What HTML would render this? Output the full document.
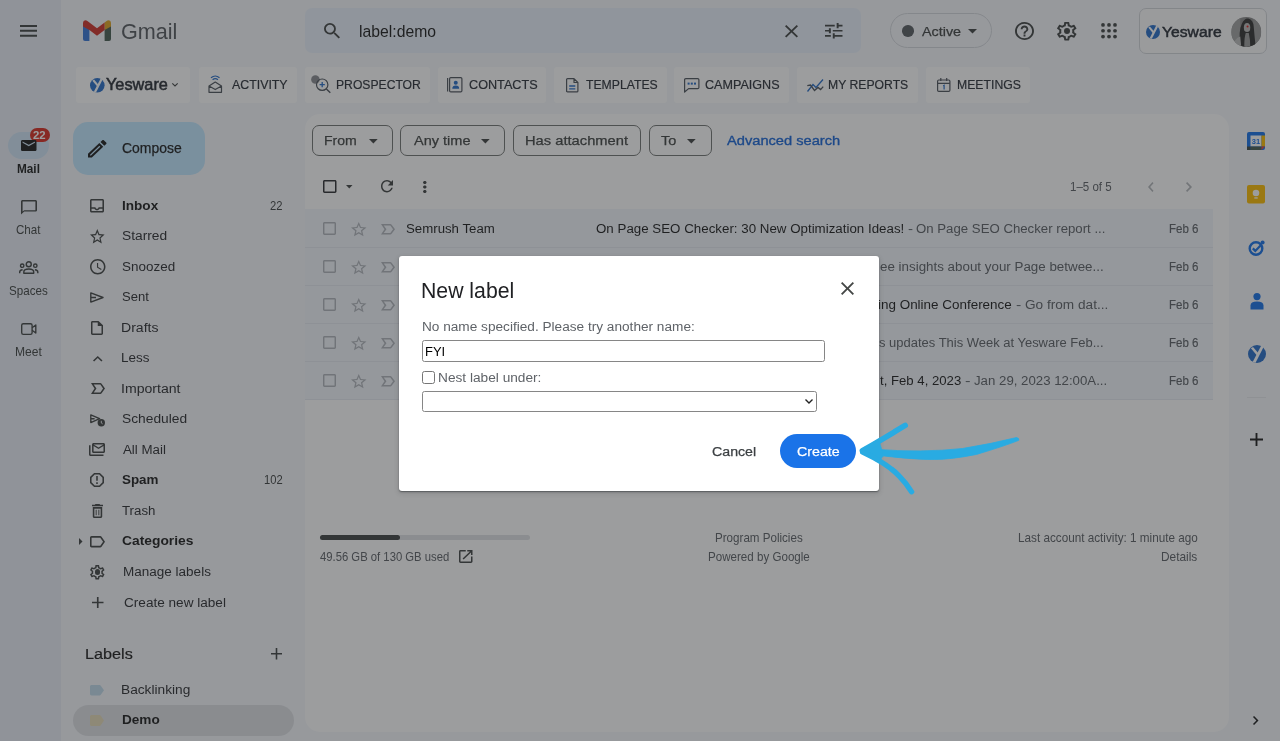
<!DOCTYPE html>
<html lang="en"><head><meta charset="utf-8"><title>Gmail - New label</title>
<style>
html,body{margin:0;padding:0}
body{width:1280px;height:741px;overflow:hidden;position:relative;background:#f6f8fc;font-family:"Liberation Sans",sans-serif;}
.b,.t,.i,.layer,.g{position:absolute}
.g{left:0;top:0;width:0;height:0;margin:0;padding:0}
.layer{left:0;top:0;width:1280px;height:741px;will-change:transform}
.t{white-space:nowrap;line-height:1;transform-origin:0 0;display:block}
.i{display:block;overflow:visible}
</style></head><body>
<div class="layer" id="app">
<div class="g" id="surfaces">
<div class="b" style="left:0px;top:0px;width:61px;height:741px;background:#e9eef6;"></div>
<div class="b" style="left:305px;top:114px;width:924px;height:618px;background:#ffffff;border-radius:15px;"></div>
<div class="b" style="left:305px;top:8px;width:556px;height:45px;background:#eaf1fb;border-radius:7px;"></div>
<div class="b" style="left:76px;top:67px;width:114px;height:35.5px;background:#ffffff;border-radius:3px;"></div>
<div class="b" style="left:199px;top:67px;width:98px;height:35.5px;background:#ffffff;border-radius:3px;"></div>
<div class="b" style="left:305px;top:67px;width:125px;height:35.5px;background:#ffffff;border-radius:3px;"></div>
<div class="b" style="left:438px;top:67px;width:108px;height:35.5px;background:#ffffff;border-radius:3px;"></div>
<div class="b" style="left:554px;top:67px;width:113px;height:35.5px;background:#ffffff;border-radius:3px;"></div>
<div class="b" style="left:674px;top:67px;width:115px;height:35.5px;background:#ffffff;border-radius:3px;"></div>
<div class="b" style="left:797px;top:67px;width:121px;height:35.5px;background:#ffffff;border-radius:3px;"></div>
<div class="b" style="left:926px;top:67px;width:104px;height:35.5px;background:#ffffff;border-radius:3px;"></div>
<div class="b" style="left:890px;top:13px;width:102px;height:35px;border-radius:17.5px;border:1px solid #d5d8dd;box-sizing:border-box;"></div>
<div class="b" style="left:1139px;top:8px;width:128px;height:46px;background:#fbfbfc;border-radius:7px;border:1px solid #d3d6da;box-sizing:border-box;"></div>
<div class="b" style="left:72.5px;top:121.5px;width:132.0px;height:53.5px;background:#c2e7ff;border-radius:15px;"></div>
<div class="b" style="left:8px;top:132px;width:41px;height:27px;background:#d0e4f6;border-radius:14px;"></div>
<div class="b" style="left:72.5px;top:705px;width:221.0px;height:30.5px;background:#dfe1e5;border-radius:16px;"></div>
<div class="b" style="left:312px;top:125px;width:81px;height:31px;border-radius:7px;border:1px solid #747775;box-sizing:border-box;"></div>
<div class="b" style="left:400px;top:125px;width:105px;height:31px;border-radius:7px;border:1px solid #747775;box-sizing:border-box;"></div>
<div class="b" style="left:513px;top:125px;width:128px;height:31px;border-radius:7px;border:1px solid #747775;box-sizing:border-box;"></div>
<div class="b" style="left:649px;top:125px;width:63px;height:31px;border-radius:7px;border:1px solid #747775;box-sizing:border-box;"></div>
<div class="b" style="left:305px;top:209px;width:908px;height:190.5px;background:#f2f6fc;"></div>
<div class="b" style="left:305px;top:247px;width:908px;height:1px;background:#e6eaf0;"></div>
<div class="b" style="left:305px;top:285px;width:908px;height:1px;background:#e6eaf0;"></div>
<div class="b" style="left:305px;top:323px;width:908px;height:1px;background:#e6eaf0;"></div>
<div class="b" style="left:305px;top:361px;width:908px;height:1px;background:#e6eaf0;"></div>
<div class="b" style="left:305px;top:399px;width:908px;height:1px;background:#e6eaf0;"></div>
<div class="b" style="left:320px;top:535px;width:210px;height:5px;background:#e1e3e6;border-radius:3px;"></div>
<div class="b" style="left:320px;top:535px;width:79.5px;height:5px;background:#444746;border-radius:3px;"></div>
<div class="b" style="left:1246.5px;top:396.5px;width:19.0px;height:1.0px;background:#e8eaed;"></div>
<div class="b" style="left:29.5px;top:127.5px;width:20.0px;height:14.5px;background:#d93025;border-radius:7.5px;"></div>
</div>
<header class="g">
<div class="b" style="left:902px;top:25.25px;width:11.5px;height:11.5px;border-radius:50%;background:#5b5f64"></div>
<div class="b" style="left:1063.7px;top:27.7px;width:6.2px;height:6.2px;border-radius:50%;background:#444746"></div>
<svg class="i" style="left:1100.5px;top:23px;width:16px;height:15.5px;fill:#444746" viewBox="0 0 16 16" preserveAspectRatio="none"><circle cx="2" cy="2" r="1.9"/><circle cx="2" cy="8" r="1.9"/><circle cx="2" cy="14" r="1.9"/><circle cx="8" cy="2" r="1.9"/><circle cx="8" cy="8" r="1.9"/><circle cx="8" cy="14" r="1.9"/><circle cx="14" cy="2" r="1.9"/><circle cx="14" cy="8" r="1.9"/><circle cx="14" cy="14" r="1.9"/></svg>
<svg class="i" style="left:83px;top:20px;width:28px;height:21px" viewBox="0 0 28 21">
<path d="M0 5.500 L0 19 Q0 21 2 21 L6.400 21 L6.400 9 Z" fill="#3b78d8"/>
<path d="M28 5.500 L28 19 Q28 21 26 21 L21.600 21 L21.600 9 Z" fill="#4a5f55"/>
<path d="M21.600 2.400 L23.600 .9 Q25.400 -.4 27 .8 Q28 1.600 28 3.200 L28 6.400 L21.600 10 Z" fill="#e0a526"/>
<path d="M0 3.200 Q0 1.600 1 .8 Q2.600 -.4 4.400 .9 L14 8.200 L21.600 2.400 L21.600 10 L14 15.800 L6.400 10 L0 6.400 Z" fill="#d1352b"/>
</svg>
<svg class="i" style="left:1146.3px;top:24.9px;width:14px;height:14px" viewBox="0 0 20 20">
<circle cx="10" cy="10" r="10" fill="#2a6fc9"/>
<path d="M14.600 .8 L17.200 2.400 L8.400 19.600 L5.200 18.800 Z" fill="#fff"/>
<path d="M3.200 3.600 L5.600 2.200 L11.600 9.200 L10.200 12 Z" fill="#fff"/></svg>
<svg class="i" style="left:1230.500px;top:17px;width:30.500px;height:30px" viewBox="0 0 30 30">
<defs><clipPath id="av"><circle cx="15" cy="15" r="15"/></clipPath></defs>
<g clip-path="url(#av)"><rect width="30" height="30" fill="#8c8c8c"/>
<rect x="0" y="0" width="9" height="30" fill="#a2a2a2"/><rect x="22" y="0" width="8" height="30" fill="#9a9a9a"/>
<path d="M9 30 Q7 14 10.500 7 Q13 1 17 1.500 Q22 2.500 22.500 10 Q23.500 22 24.500 30 Z" fill="#343434"/>
<ellipse cx="15.800" cy="10.500" rx="3.200" ry="4.600" fill="#b9b9b9"/>
<path d="M13 30 Q13 20 14.500 16 L17.500 16 Q19 22 19 30 Z" fill="#9c9c9c"/>
<path d="M2 30 Q3 21 9 19.500 L10 30 Z" fill="#bdbdbd"/>
<circle cx="16.300" cy="9.600" r="1" fill="#e02020"/></g></svg>
<span class="t" style="left:120.99px;top:21px;font-size:22.6px;color:#585c61;transform:scaleX(0.9563);">Gmail</span>
<span class="t" style="left:358.51px;top:23px;font-size:16.3px;color:#1f1f1f;transform:scaleX(0.9672);">label:demo</span>
<span class="t" style="left:921.5px;top:25px;font-size:13.7px;color:#444746;transform:scaleX(1.0476);-webkit-text-stroke:0.25px #444746;">Active</span>
<span class="t" style="left:1161.75px;top:24px;font-size:15.2px;color:#2b3038;transform:scaleX(1.0336);-webkit-text-stroke:0.5px #2b3038;">Yesware</span>
<svg class="i" style="left:20px;top:24.8px;width:17px;height:11.7px;fill:#444746;" viewBox="3 6 18 12" preserveAspectRatio="none"><path d="M3 18h18v-2H3v2zm0-5h18v-2H3v2zm0-7v2h18V6H3z"/></svg>
<svg class="i" style="left:324px;top:23px;width:16px;height:15.5px;fill:#444746;" viewBox="3 3 17.49 17.49" preserveAspectRatio="none"><path d="M15.5 14h-.79l-.28-.27A6.471 6.471 0 0 0 16 9.5 6.5 6.5 0 1 0 9.5 16c1.61 0 3.09-.59 4.23-1.57l.27.28v.79l5 4.99L20.49 19l-4.99-5zm-6 0C7.01 14 5 11.99 5 9.5S7.01 5 9.5 5 14 7.01 14 9.5 11.99 14 9.5 14z"/></svg>
<svg class="i" style="left:785px;top:24.5px;width:13px;height:12.5px;fill:#444746;" viewBox="5 5 14 14" preserveAspectRatio="none"><path d="M19 6.41L17.59 5 12 10.59 6.41 5 5 6.41 10.59 12 5 17.59 6.41 19 12 13.41 17.59 19 19 17.59 13.41 12z"/></svg>
<svg class="i" style="left:825px;top:23px;width:17.5px;height:15.5px;fill:#444746;" viewBox="3 3 18 18" preserveAspectRatio="none"><path d="M3 17v2h6v-2H3zM3 5v2h10V5H3zm10 16v-2h8v-2h-8v-2h-2v6h2zM7 9v2H3v2h4v2h2V9H7zm14 4v-2H11v2h10zm-6-4h2V7h4V5h-4V3h-2v6z"/></svg>
<svg class="i" style="left:967.5px;top:29px;width:9px;height:4.5px;fill:#444746;" viewBox="7 10 10 5" preserveAspectRatio="none"><path d="M7 10l5 5 5-5z"/></svg>
<svg class="i" style="left:1015px;top:22px;width:19px;height:18px;fill:#444746;" viewBox="2 2 20 20" preserveAspectRatio="none"><path d="M11 18h2v-2h-2v2zm1-16C6.48 2 2 6.48 2 12s4.48 10 10 10 10-4.48 10-10S17.52 2 12 2zm0 18c-4.41 0-8-3.59-8-8s3.59-8 8-8 8 3.59 8 8-3.59 8-8 8zm0-14c-2.21 0-4 1.79-4 4h2c0-1.1.9-2 2-2s2 .9 2 2c0 2-3 1.75-3 5h2c0-2.25 3-2.5 3-5 0-2.21-1.79-4-4-4z"/></svg>
<svg class="i" style="left:1057px;top:21.5px;width:19.5px;height:18.5px;fill:#444746;" viewBox="2.27 2 19.45 20" preserveAspectRatio="none"><path d="M19.43 12.98c.04-.32.07-.64.07-.98 0-.34-.03-.66-.07-.98l2.11-1.65c.19-.15.24-.42.12-.64l-2-3.46a.5.5 0 0 0-.61-.22l-2.49 1c-.52-.4-1.08-.73-1.69-.98l-.38-2.65A.488.488 0 0 0 14 2h-4c-.25 0-.46.18-.49.42l-.38 2.65c-.61.25-1.17.59-1.69.98l-2.49-1a.566.566 0 0 0-.18-.03c-.17 0-.34.09-.43.25l-2 3.46c-.13.22-.07.49.12.64l2.11 1.65c-.04.32-.07.65-.07.98 0 .33.03.66.07.98l-2.11 1.65c-.19.15-.24.42-.12.64l2 3.46a.5.5 0 0 0 .61.22l2.49-1c.52.4 1.08.73 1.69.98l.38 2.65c.03.24.24.42.49.42h4c.25 0 .46-.18.49-.42l.38-2.65c.61-.25 1.17-.59 1.69-.98l2.49 1c.06.02.12.03.18.03.17 0 .34-.09.43-.25l2-3.46c.12-.22.07-.49-.12-.64l-2.11-1.65zm-1.98-1.71c.04.31.05.52.05.73 0 .21-.02.43-.05.73l-.14 1.13.89.7 1.08.84-.7 1.21-1.27-.51-1.04-.42-.9.68c-.43.32-.84.56-1.25.73l-1.06.43-.16 1.13-.2 1.35h-1.4l-.19-1.35-.16-1.13-1.06-.43c-.43-.18-.83-.41-1.23-.71l-.91-.7-1.06.43-1.27.51-.7-1.21 1.08-.84.89-.7-.14-1.13c-.03-.31-.05-.54-.05-.74s.02-.43.05-.73l.14-1.13-.89-.7-1.08-.84.7-1.21 1.27.51 1.04.42.9-.68c.43-.32.84-.56 1.25-.73l1.06-.43.16-1.13.2-1.35h1.39l.19 1.35.16 1.13 1.06.43c.43.18.83.41 1.23.71l.91.7 1.06-.43 1.27-.51.7 1.21-1.07.85-.89.7.14 1.13z"/></svg>
</header>
<div class="g" role="toolbar" aria-label="Yesware">
<svg class="i" style="left:90.4px;top:77.7px;width:14.6px;height:14.6px" viewBox="0 0 20 20">
<circle cx="10" cy="10" r="10" fill="#2a6fc9"/>
<path d="M14.600 .8 L17.200 2.400 L8.400 19.600 L5.200 18.800 Z" fill="#fff"/>
<path d="M3.200 3.600 L5.600 2.200 L11.600 9.200 L10.200 12 Z" fill="#fff"/></svg>
<svg class="i" style="left:172px;top:83px;width:6px;height:3.5px;fill:none;stroke:#444746;stroke-width:1.1" viewBox="0 0 6 3.5"><path d="M.3 .3 L3 3 L5.700 .3"/></svg>
<svg class="i" style="left:208px;top:75px;width:14.5px;height:18px;fill:none;stroke:#50565e;stroke-width:1.200" viewBox="0 0 14.500 18">
<path d="M1 11 L7.250 7 L13.500 11 L13.500 17.300 L1 17.300 Z M1 11 L7.250 14.600 L13.500 11" stroke-linejoin="round"/>
<path d="M4.600 4.800 Q7.250 2.600 9.900 4.800" stroke="#2a6fc9"/><path d="M3 2.800 Q7.250 -.8 11.500 2.800" stroke="#2a6fc9"/></svg>
<svg class="i" style="left:310.5px;top:74.5px;width:20px;height:18.500px" viewBox="0 0 20 18.500">
<circle cx="4.400" cy="4.400" r="4.250" fill="#8a8d92"/>
<circle cx="11.200" cy="9.700" r="5.700" fill="none" stroke="#50565e" stroke-width="1.200"/>
<path d="M15.400 14 L19.300 17.800" stroke="#50565e" stroke-width="1.400"/>
<path d="M8.600 9.700 H13.800 M11.200 7.100 V12.300" stroke="#2a6fc9" stroke-width="1.300"/></svg>
<svg class="i" style="left:447px;top:77px;width:15.500px;height:15.500px" viewBox="0 0 15.500 15.500">
<rect x="2.600" y=".6" width="12.300" height="14.300" rx="1.200" fill="none" stroke="#50565e" stroke-width="1.200"/>
<path d="M.6 1 V14.500" stroke="#50565e" stroke-width="1.200"/>
<circle cx="8.750" cy="5.800" r="2" fill="#2a6fc9"/><path d="M5.300 11.800 Q5.300 8.600 8.750 8.600 Q12.200 8.600 12.200 11.800 Z" fill="#2a6fc9"/></svg>
<svg class="i" style="left:565.500px;top:77.500px;width:12.500px;height:14.500px" viewBox="0 0 12.500 14.500">
<path d="M.6 1.600 Q.6 .6 1.600 .6 H8 L11.900 4.500 V12.900 Q11.900 13.900 10.900 13.900 H1.600 Q.6 13.900 .6 12.900 Z M8 .6 V4.500 H11.900" fill="none" stroke="#50565e" stroke-width="1.200" stroke-linejoin="round"/>
<path d="M3.200 8 H9.300 M3.200 10.800 H9.300" stroke="#2a6fc9" stroke-width="1.300"/></svg>
<svg class="i" style="left:684px;top:77.500px;width:15.500px;height:15px" viewBox="0 0 15.500 15">
<path d="M.6 1.800 Q.6 .6 1.800 .6 H13.700 Q14.900 .6 14.900 1.800 V9.400 Q14.900 10.600 13.700 10.600 H4.600 L.6 14 Z" fill="none" stroke="#50565e" stroke-width="1.200" stroke-linejoin="round"/>
<rect x="3.600" y="4.600" width="2" height="2" fill="#2a6fc9"/><rect x="6.800" y="4.600" width="2" height="2" fill="#2a6fc9"/><rect x="10" y="4.600" width="2" height="2" fill="#2a6fc9"/></svg>
<svg class="i" style="left:806.500px;top:78.500px;width:16.500px;height:13px;fill:none;stroke-width:1.300" viewBox="0 0 16.500 13">
<path d="M.5 12.500 L6 5.500 L9 8.500 L16 .5" stroke="#2a6fc9"/>
<path d="M.3 6.600 L3.500 6 L7.500 11.500 L11 8.400 L13.600 10.600 L16.200 7.600" stroke="#50565e"/></svg>
<svg class="i" style="left:936.500px;top:78px;width:13.500px;height:14px" viewBox="0 0 13.500 14">
<rect x=".6" y="2" width="12.300" height="11.400" rx="1.200" fill="none" stroke="#50565e" stroke-width="1.200"/>
<path d="M.6 5.400 H12.900 M3.800 0 V3 M9.700 0 V3" stroke="#50565e" stroke-width="1.200"/>
<path d="M6.200 8 L7.100 7.400 V11.400" stroke="#2a6fc9" stroke-width="1.200" fill="none"/></svg>
<span class="t" style="left:105.75px;top:76px;font-size:17px;color:#2b3038;transform:scaleX(0.9587);-webkit-text-stroke:0.55px #2b3038;">Yesware</span>
<span class="t" style="left:232px;top:78px;font-size:13.3px;color:#2e333b;transform:scaleX(0.9294);-webkit-text-stroke:0.2px #2e333b;">ACTIVITY</span>
<span class="t" style="left:335.55px;top:78px;font-size:13.3px;color:#2e333b;transform:scaleX(0.9138);-webkit-text-stroke:0.2px #2e333b;">PROSPECTOR</span>
<span class="t" style="left:468.91px;top:78px;font-size:13.3px;color:#2e333b;transform:scaleX(0.9510);-webkit-text-stroke:0.2px #2e333b;">CONTACTS</span>
<span class="t" style="left:585.81px;top:78px;font-size:13.3px;color:#2e333b;transform:scaleX(0.9182);-webkit-text-stroke:0.2px #2e333b;">TEMPLATES</span>
<span class="t" style="left:705.41px;top:78px;font-size:13.3px;color:#2e333b;transform:scaleX(0.9466);-webkit-text-stroke:0.2px #2e333b;">CAMPAIGNS</span>
<span class="t" style="left:828.05px;top:78px;font-size:13.3px;color:#2e333b;transform:scaleX(0.9175);-webkit-text-stroke:0.2px #2e333b;">MY REPORTS</span>
<span class="t" style="left:956.54px;top:78px;font-size:13.3px;color:#2e333b;transform:scaleX(0.9210);-webkit-text-stroke:0.2px #2e333b;">MEETINGS</span>
</div>
<nav class="g" aria-label="Apps">
<svg class="i" style="left:19px;top:261px;width:19.500px;height:13px;fill:none;stroke:#444746;stroke-width:1.400" viewBox="0 0 19.500 13">
<circle cx="9.750" cy="3.300" r="2.500"/><circle cx="3.200" cy="4.700" r="1.700"/><circle cx="16.300" cy="4.700" r="1.700"/>
<path d="M4.800 12.300 V10.900 Q4.800 8 9.750 8 Q14.700 8 14.700 10.900 V12.300 Z" stroke-linejoin="round"/>
<path d="M.7 12.300 V11 Q.7 9 3.600 8.700 M18.800 12.300 V11 Q18.800 9 15.900 8.700"/></svg>
<svg class="i" style="left:21px;top:322.500px;width:15.500px;height:12px;fill:none;stroke:#444746;stroke-width:1.350;stroke-linejoin:round" viewBox="0 0 15.500 12"><rect x=".7" y=".7" width="10.400" height="10.600" rx="1.600"/><path d="M11.100 4.700 L14.800 2 V10 L11.100 7.300"/></svg>
<span class="t" style="left:33.14px;top:130px;font-size:10.8px;color:#ffffff;transform:scaleX(1.0520);font-weight:700;">22</span>
<span class="t" style="left:17.26px;top:164px;font-size:11.9px;color:#1f1f1f;transform:scaleX(0.9909);font-weight:700;">Mail</span>
<span class="t" style="left:15.96px;top:225px;font-size:11.9px;color:#444746;transform:scaleX(0.9748);">Chat</span>
<span class="t" style="left:9.14px;top:286px;font-size:11.9px;color:#444746;transform:scaleX(0.9757);">Spaces</span>
<span class="t" style="left:14.55px;top:347px;font-size:11.9px;color:#444746;transform:scaleX(1.0170);">Meet</span>
<svg class="i" style="left:21px;top:140px;width:15.5px;height:11px;fill:#1f1f1f;" viewBox="2 4 20 16" preserveAspectRatio="none"><path d="M20 4H4c-1.1 0-1.99.9-1.99 2L2 18c0 1.1.9 2 2 2h16c1.1 0 2-.9 2-2V6c0-1.1-.9-2-2-2zm0 4l-8 5-8-5V6l8 5 8-5v2z"/></svg>
<svg class="i" style="left:20.5px;top:199.5px;width:16px;height:14.5px;fill:#444746;" viewBox="2 2 20 20" preserveAspectRatio="none"><path d="M20 2H4c-1.1 0-2 .9-2 2v18l4-4h14c1.1 0 2-.9 2-2V4c0-1.1-.9-2-2-2zm0 14H6l-2 2V4h16v12z"/></svg>
</nav>
<nav class="g" aria-label="Mail folders">
<svg class="i" style="left:90px;top:291.500px;width:14px;height:11px;fill:none;stroke:#444746;stroke-width:1.400;stroke-linejoin:round" viewBox="0 0 14 11"><path d="M.8 .9 L13 5.500 L.8 10.100 Z M.8 5.500 H6"/></svg>
<svg class="i" style="left:90px;top:414px;width:15px;height:12.500px" viewBox="0 0 15 12.500">
<path d="M.8 .8 L9.600 4.700 L.8 8.600 Z M.8 4.700 H4.600" fill="none" stroke="#444746" stroke-width="1.350" stroke-linejoin="round"/>
<circle cx="11.300" cy="8.800" r="3.700" fill="#444746"/><path d="M11.300 6.800 V9 L12.700 9.900" stroke="#f6f8fc" stroke-width=".9" fill="none"/></svg>
<div class="b" style="left:94.500px;top:569px;width:5.500px;height:5.500px;border-radius:50%;background:#444746"></div>
<span class="t" style="left:121.95px;top:141px;font-size:14.6px;color:#1f1f1f;transform:scaleX(0.9557);-webkit-text-stroke:0.25px #1f1f1f;">Compose</span>
<span class="t" style="left:121.65px;top:199px;font-size:13.7px;color:#1f1f1f;transform:scaleX(0.9927);font-weight:700;">Inbox</span>
<span class="t" style="left:122.07px;top:229px;font-size:13.7px;color:#303134;transform:scaleX(1.0062);">Starred</span>
<span class="t" style="left:122.08px;top:260px;font-size:13.7px;color:#303134;transform:scaleX(0.9832);">Snoozed</span>
<span class="t" style="left:122.09px;top:290px;font-size:13.7px;color:#303134;transform:scaleX(0.9532);">Sent</span>
<span class="t" style="left:121.4px;top:321px;font-size:13.7px;color:#303134;transform:scaleX(1.0274);">Drafts</span>
<span class="t" style="left:121.45px;top:351px;font-size:13.7px;color:#303134;transform:scaleX(0.9840);">Less</span>
<span class="t" style="left:121.4px;top:382px;font-size:13.7px;color:#303134;transform:scaleX(1.0291);">Important</span>
<span class="t" style="left:122.07px;top:412px;font-size:13.7px;color:#303134;transform:scaleX(1.0071);">Scheduled</span>
<span class="t" style="left:122.5px;top:443px;font-size:13.7px;color:#303134;transform:scaleX(0.9712);">All Mail</span>
<span class="t" style="left:122.29px;top:473px;font-size:13.7px;color:#1f1f1f;transform:scaleX(0.9791);font-weight:700;">Spam</span>
<span class="t" style="left:122.29px;top:504px;font-size:13.7px;color:#303134;transform:scaleX(0.9694);">Trash</span>
<span class="t" style="left:122.07px;top:534px;font-size:13.7px;color:#1f1f1f;transform:scaleX(1.0097);font-weight:700;">Categories</span>
<span class="t" style="left:269.97px;top:201px;font-size:11.9px;color:#444746;transform:scaleX(0.9429);">22</span>
<span class="t" style="left:263.8px;top:475px;font-size:11.9px;color:#444746;transform:scaleX(0.9394);">102</span>
<span class="t" style="left:123.44px;top:565px;font-size:13.7px;color:#303134;transform:scaleX(0.9873);">Manage labels</span>
<span class="t" style="left:123.86px;top:596px;font-size:13.7px;color:#303134;transform:scaleX(0.9924);">Create new label</span>
<span class="t" style="left:85.23px;top:646px;font-size:15.3px;color:#1f1f1f;transform:scaleX(1.0596);-webkit-text-stroke:0.2px #1f1f1f;">Labels</span>
<span class="t" style="left:121.43px;top:683px;font-size:13.7px;color:#303134;transform:scaleX(1.0006);">Backlinking</span>
<span class="t" style="left:121.65px;top:713px;font-size:13.7px;color:#1f1f1f;transform:scaleX(0.9930);font-weight:700;">Demo</span>
<svg class="i" style="left:88px;top:139.5px;width:18.5px;height:17.5px;fill:#1f1f1f;" viewBox="3 3 18 18" preserveAspectRatio="none"><path d="M14.06 9.02l.92.92L5.92 19H5v-.92l9.06-9.06M17.66 3c-.25 0-.51.1-.7.29l-1.83 1.83 3.75 3.75 1.83-1.83a.996.996 0 0 0 0-1.41l-2.34-2.34c-.2-.2-.45-.29-.71-.29zm-3.6 3.19L3 17.25V21h3.75L17.81 9.94l-3.75-3.75z"/></svg>
<svg class="i" style="left:90px;top:199px;width:14px;height:13.5px;fill:#444746;" viewBox="3 3 18 18" preserveAspectRatio="none"><path d="M19 3H5c-1.1 0-2 .9-2 2v14c0 1.1.89 2 2 2h14c1.1 0 2-.9 2-2V5c0-1.1-.9-2-2-2zm0 16H5v-3h3.56c.69 1.19 1.97 2 3.45 2s2.75-.81 3.45-2H19v3zm0-5h-4.99c0 1.1-.9 2-2 2s-2-.9-2-2H5V5h14v9z"/></svg>
<svg class="i" style="left:89.7px;top:229.3px;width:14.6px;height:14.5px;fill:#444746;" viewBox="2 2 20 19" preserveAspectRatio="none"><path d="M22 9.24l-7.19-.62L12 2 9.19 8.63 2 9.24l5.46 4.73L5.82 21 12 17.27 18.18 21l-1.63-7.03L22 9.24zM12 15.4l-3.76 2.27 1-4.28-3.32-2.88 4.38-.38L12 6.1l1.71 4.04 4.38.38-3.32 2.88 1 4.28L12 15.4z"/></svg>
<svg class="i" style="left:89.5px;top:259px;width:15.5px;height:15.5px;fill:#444746;" viewBox="2 2 20 20" preserveAspectRatio="none"><path d="M11.99 2C6.47 2 2 6.48 2 12s4.47 10 9.99 10C17.52 22 22 17.52 22 12S17.52 2 11.99 2zM12 20c-4.42 0-8-3.58-8-8s3.58-8 8-8 8 3.58 8 8-3.58 8-8 8zm.5-13H11v6l5.25 3.15.75-1.23-4.5-2.67z"/></svg>
<svg class="i" style="left:91px;top:320.5px;width:12px;height:14px;fill:#444746;" viewBox="4 2 16 20" preserveAspectRatio="none"><path d="M14 2H6c-1.1 0-1.99.9-1.99 2L4 20c0 1.1.89 2 1.99 2H18c1.1 0 2-.9 2-2V8l-6-6zM6 20V4h7v5h5v11H6z"/></svg>
<svg class="i" style="left:92.5px;top:356px;width:9.5px;height:5.5px;fill:#444746;" viewBox="6 8 12 7.41" preserveAspectRatio="none"><path d="M12 8l-6 6 1.41 1.41L12 10.83l4.59 4.58L18 14z"/></svg>
<svg class="i" style="left:90.5px;top:383px;width:14px;height:11px;fill:#444746;" viewBox="3 5 18 14" preserveAspectRatio="none"><path d="M15 19H3l4.5-7L3 5h12c.65 0 1.26.31 1.63.84L21 12l-4.37 6.16c-.37.52-.98.84-1.63.84zm-8.5-2H15l3.5-5L15 7H6.5l3.5 5-3.500 5z"/></svg>
<svg class="i" style="left:89px;top:443px;width:16px;height:13px;fill:#444746;" viewBox="1 4 21 17" preserveAspectRatio="none"><path d="M22 6c0-1.1-.9-2-2-2H7c-1.1 0-2 .9-2 2v9c0 1.1.9 2 2 2h13c1.1 0 2-.9 2-2V6zm-2 0l-6.5 4L7 6h13zm0 9H7V8l6.5 4L20 8v7zM3 19V7H1v12c0 1.1.9 2 2 2h17v-2H3z"/></svg>
<svg class="i" style="left:90px;top:473px;width:14px;height:14px;fill:#444746;" viewBox="3 3 18 18" preserveAspectRatio="none"><path d="M15.73 3H8.27L3 8.27v7.46L8.27 21h7.46L21 15.73V8.27L15.73 3zM19 14.9L14.9 19H9.1L5 14.9V9.1L9.1 5h5.8L19 9.1v5.8zM11 7h2v6h-2zm0 8h2v2h-2z"/></svg>
<svg class="i" style="left:91.5px;top:503.5px;width:11px;height:14px;fill:#444746;" viewBox="5 3 14 18" preserveAspectRatio="none"><path d="M16 9v10H8V9h8m-1.5-6h-5l-1 1H5v2h14V4h-3.500l-1-1zM18 7H6v12c0 1.1.9 2 2 2h8c1.1 0 2-.9 2-2V7zM9.7 10.5h1.200v7H9.7zm3.400 0h1.200v7h-1.200z"/></svg>
<svg class="i" style="left:79px;top:537.5px;width:3.5px;height:7px;fill:#444746;" viewBox="10 7 5 10" preserveAspectRatio="none"><path d="M10 17l5-5-5-5v10z"/></svg>
<svg class="i" style="left:89.5px;top:535.5px;width:15px;height:11.5px;fill:#444746;" viewBox="3 5 19 14" preserveAspectRatio="none"><path d="M17.63 5.84C17.27 5.33 16.67 5 16 5L5 5.01C3.9 5.01 3 5.9 3 7v10c0 1.1.9 1.99 2 1.99L16 19c.67 0 1.27-.33 1.63-.84L22 12l-4.37-6.16zM16 17H5V7h11l3.55 5L16 17z"/></svg>
<svg class="i" style="left:90px;top:564.5px;width:14.5px;height:14.5px;fill:#444746;" viewBox="2.27 2 19.45 20" preserveAspectRatio="none"><path d="M19.43 12.98c.04-.32.07-.64.07-.98 0-.34-.03-.66-.07-.98l2.11-1.65c.19-.15.24-.42.12-.64l-2-3.46a.5.5 0 0 0-.61-.22l-2.49 1c-.52-.4-1.08-.73-1.69-.98l-.38-2.65A.488.488 0 0 0 14 2h-4c-.25 0-.46.18-.49.42l-.38 2.65c-.61.25-1.17.59-1.69.98l-2.49-1a.566.566 0 0 0-.18-.03c-.17 0-.34.09-.43.25l-2 3.46c-.13.22-.07.49.12.64l2.11 1.65c-.04.32-.07.65-.07.98 0 .33.03.66.07.98l-2.11 1.65c-.19.15-.24.42-.12.64l2 3.46a.5.5 0 0 0 .61.22l2.49-1c.52.4 1.08.73 1.69.98l.38 2.65c.03.24.24.42.49.42h4c.25 0 .46-.18.49-.42l.38-2.65c.61-.25 1.17-.59 1.69-.98l2.49 1c.06.02.12.03.18.03.17 0 .34-.09.43-.25l2-3.46c.12-.22.07-.49-.12-.64l-2.11-1.65zm-1.98-1.71c.04.31.05.52.05.73 0 .21-.02.43-.05.73l-.14 1.13.89.7 1.08.84-.7 1.21-1.27-.51-1.04-.42-.9.68c-.43.32-.84.56-1.25.73l-1.06.43-.16 1.13-.2 1.35h-1.4l-.19-1.35-.16-1.13-1.06-.43c-.43-.18-.83-.41-1.23-.71l-.91-.7-1.06.43-1.27.51-.7-1.21 1.08-.84.89-.7-.14-1.13c-.03-.31-.05-.54-.05-.74s.02-.43.05-.73l.14-1.13-.89-.7-1.08-.84.7-1.21 1.27.51 1.04.42.9-.68c.43-.32.84-.56 1.25-.73l1.06-.43.16-1.13.2-1.35h1.39l.19 1.35.16 1.13 1.06.43c.43.18.83.41 1.23.71l.91.7 1.06-.43 1.27-.51.7 1.21-1.07.85-.89.7.14 1.13z"/></svg>
<svg class="i" style="left:91.5px;top:597px;width:11.5px;height:11px;fill:#444746;" viewBox="5 5 14 14" preserveAspectRatio="none"><path d="M19 13h-6v6h-2v-6H5v-2h6V5h2v6h6v2z"/></svg>
<svg class="i" style="left:271px;top:648px;width:11px;height:11.5px;fill:#444746;" viewBox="5 5 14 14" preserveAspectRatio="none"><path d="M19 13h-6v6h-2v-6H5v-2h6V5h2v6h6v2z"/></svg>
<svg class="i" style="left:90px;top:684.5px;width:14px;height:10.5px;fill:#c2dceb;" viewBox="3 5 19 14" preserveAspectRatio="none"><path d="M17.63 5.84C17.27 5.33 16.67 5 16 5L5 5.01C3.9 5.01 3 5.9 3 7v10c0 1.1.9 1.990 2 1.990L16 19c.67 0 1.27-.33 1.63-.84L22 12l-4.37-6.16z"/></svg>
<svg class="i" style="left:90px;top:714.5px;width:14px;height:11px;fill:#e6dcb9;" viewBox="3 5 19 14" preserveAspectRatio="none"><path d="M17.63 5.84C17.27 5.33 16.67 5 16 5L5 5.01C3.9 5.01 3 5.9 3 7v10c0 1.1.9 1.990 2 1.990L16 19c.67 0 1.27-.33 1.63-.84L22 12l-4.37-6.16z"/></svg>
</nav>
<aside class="g" aria-label="Side panel">
<svg class="i" style="left:1247px;top:132px;width:18px;height:18px" viewBox="0 0 18 18">
<rect x="0" y="0" width="18" height="18" rx="2" fill="#1a73e8"/><rect x="3.500" y="3.500" width="11" height="11" fill="#ffffff"/>
<rect x="14.500" y="3.500" width="3.500" height="11" fill="#fbbc04"/><rect x="3.500" y="14.500" width="11" height="3.500" fill="#4a5f55"/>
<path d="M14.500 14.500 H18 L14.500 18 Z" fill="#ea4335"/><rect x="0" y="14.500" width="3.500" height="3.500" fill="#3f4a46"/>
<text x="9" y="12.200" font-family="Liberation Sans, sans-serif" font-size="7.500" font-weight="700" text-anchor="middle" fill="#1a73e8">31</text></svg>
<svg class="i" style="left:1247px;top:185px;width:18px;height:18.500px" viewBox="0 0 18 18.500">
<rect width="18" height="18.500" rx="2" fill="#fbbc04"/><circle cx="9" cy="8" r="3.300" fill="#fff"/><rect x="7.300" y="12.300" width="3.400" height="1.300" fill="#fff"/></svg>
<svg class="i" style="left:1248px;top:239.500px;width:17px;height:16px" viewBox="0 0 17 16">
<circle cx="8" cy="8.500" r="6.300" fill="none" stroke="#1a73e8" stroke-width="2.400"/>
<path d="M4.800 8.400 L7.300 10.900 L13.500 4.500" fill="none" stroke="#1a73e8" stroke-width="2.200"/><circle cx="14.600" cy="2.400" r="2" fill="#1a73e8"/></svg>
<svg class="i" style="left:1249.500px;top:292.500px;width:13.500px;height:16.500px" viewBox="0 0 13.500 16.500">
<circle cx="7" cy="3.600" r="3.600" fill="#1a73e8"/><path d="M.5 16.500 V12.500 Q.5 8.500 7 8.500 Q13.500 8.500 13.500 12.500 V16.500 Z" fill="#1a73e8"/></svg>
<svg class="i" style="left:1247.5px;top:345px;width:18px;height:18px" viewBox="0 0 20 20">
<circle cx="10" cy="10" r="10" fill="#2a6fc9"/>
<path d="M14.600 .8 L17.200 2.400 L8.400 19.600 L5.200 18.800 Z" fill="#fff"/>
<path d="M3.200 3.600 L5.600 2.200 L11.600 9.200 L10.200 12 Z" fill="#fff"/></svg>
<svg class="i" style="left:1250px;top:433px;width:13px;height:13px;fill:#1f1f1f;" viewBox="5 5 14 14" preserveAspectRatio="none"><path d="M19 13h-6v6h-2v-6H5v-2h6V5h2v6h6v2z"/></svg>
<svg class="i" style="left:1252.5px;top:716px;width:5.5px;height:9px;fill:#1f1f1f;" viewBox="8.59 6 7.41 12" preserveAspectRatio="none"><path d="M10 6L8.59 7.41 13.17 12l-4.58 4.59L10 18l6-6z"/></svg>
</aside>
<main class="g">
<span class="t" style="left:324.4px;top:134px;font-size:13.7px;color:#444746;transform:scaleX(1.0271);-webkit-text-stroke:0.25px #444746;">From</span>
<span class="t" style="left:413.5px;top:134px;font-size:13.7px;color:#444746;transform:scaleX(1.0618);-webkit-text-stroke:0.25px #444746;">Any time</span>
<span class="t" style="left:524.85px;top:134px;font-size:13.7px;color:#444746;transform:scaleX(1.0746);-webkit-text-stroke:0.25px #444746;">Has attachment</span>
<span class="t" style="left:661.27px;top:134px;font-size:13.7px;color:#444746;transform:scaleX(1.0584);-webkit-text-stroke:0.25px #444746;">To</span>
<span class="t" style="left:727px;top:134px;font-size:13.7px;color:#1c68d8;transform:scaleX(1.0705);-webkit-text-stroke:0.35px #1c68d8;">Advanced search</span>
<span class="t" style="left:1070.28px;top:182px;font-size:11.9px;color:#5f6368;transform:scaleX(0.9693);">1–5 of 5</span>
<span class="t" style="left:1168.6px;top:224px;font-size:11.9px;color:#5f6368;transform:scaleX(0.9684);-webkit-text-stroke:0.15px #5f6368;">Feb 6</span>
<span class="t" style="left:1168.6px;top:262px;font-size:11.9px;color:#5f6368;transform:scaleX(0.9684);-webkit-text-stroke:0.15px #5f6368;">Feb 6</span>
<span class="t" style="left:1168.6px;top:300px;font-size:11.9px;color:#5f6368;transform:scaleX(0.9684);-webkit-text-stroke:0.15px #5f6368;">Feb 6</span>
<span class="t" style="left:1168.6px;top:338px;font-size:11.9px;color:#5f6368;transform:scaleX(0.9684);-webkit-text-stroke:0.15px #5f6368;">Feb 6</span>
<span class="t" style="left:1168.6px;top:376px;font-size:11.9px;color:#5f6368;transform:scaleX(0.9684);-webkit-text-stroke:0.15px #5f6368;">Feb 6</span>
<span class="t" style="left:406.09px;top:222px;font-size:13.7px;color:#1f1f1f;transform:scaleX(0.9671);">Semrush Team</span>
<span class="t" style="left:595.87px;top:222px;font-size:13.7px;color:#1f1f1f;transform:scaleX(0.9740);">On Page SEO Checker: 30 New Optimization Ideas!</span>
<span class="t" style="left:907.53px;top:222px;font-size:13.7px;color:#5f6368;transform:scaleX(1.0992);">-</span>
<span class="t" style="left:916.08px;top:222px;font-size:13.7px;color:#5f6368;transform:scaleX(0.9652);">On Page SEO Checker report ...</span>
<span class="t" style="left:880.28px;top:260px;font-size:13.7px;color:#5f6368;transform:scaleX(0.9764);">ee insights about your Page betwee...</span>
<span class="t" style="left:878.16px;top:298px;font-size:13.7px;color:#1f1f1f;transform:scaleX(0.9821);">ing Online Conference</span>
<span class="t" style="left:1016.31px;top:298px;font-size:13.7px;color:#5f6368;transform:scaleX(1.1541);">-</span>
<span class="t" style="left:1024.86px;top:298px;font-size:13.7px;color:#5f6368;transform:scaleX(0.9955);">Go from dat...</span>
<span class="t" style="left:879.4px;top:336px;font-size:13.7px;color:#5f6368;transform:scaleX(0.9478);">s updates This Week at Yesware Feb...</span>
<span class="t" style="left:879.8px;top:374px;font-size:13.7px;color:#1f1f1f;transform:scaleX(0.9621);">t, Feb 4, 2023</span>
<span class="t" style="left:965.08px;top:374px;font-size:13.7px;color:#5f6368;transform:scaleX(1.2091);">-</span>
<span class="t" style="left:974.09px;top:374px;font-size:13.7px;color:#5f6368;transform:scaleX(0.9669);">Jan 29, 2023 12:00A...</span>
<svg class="i" style="left:368.5px;top:139px;width:8.7px;height:4.5px;fill:#444746;" viewBox="7 10 10 5" preserveAspectRatio="none"><path d="M7 10l5 5 5-5z"/></svg>
<svg class="i" style="left:480.5px;top:139px;width:8.7px;height:4.5px;fill:#444746;" viewBox="7 10 10 5" preserveAspectRatio="none"><path d="M7 10l5 5 5-5z"/></svg>
<svg class="i" style="left:687px;top:139px;width:8.7px;height:4.5px;fill:#444746;" viewBox="7 10 10 5" preserveAspectRatio="none"><path d="M7 10l5 5 5-5z"/></svg>
<svg class="i" style="left:323px;top:180px;width:13.5px;height:13px;fill:#303134;" viewBox="3 3 18 18" preserveAspectRatio="none"><path d="M19 5v14H5V5h14m0-2H5c-1.1 0-2 .9-2 2v14c0 1.1.9 2 2 2h14c1.1 0 2-.9 2-2V5c0-1.1-.9-2-2-2z"/></svg>
<svg class="i" style="left:345.5px;top:184.5px;width:6.5px;height:3.5px;fill:#444746;" viewBox="7 10 10 5" preserveAspectRatio="none"><path d="M7 10l5 5 5-5z"/></svg>
<svg class="i" style="left:381px;top:180px;width:12px;height:12.5px;fill:#444746;" viewBox="4.01 4 15.99 16" preserveAspectRatio="none"><path d="M17.65 6.35A7.958 7.958 0 0 0 12 4c-4.42 0-7.99 3.58-7.99 8s3.57 8 7.99 8c3.730 0 6.840-2.550 7.730-6h-2.080A5.990 5.990 0 0 1 12 18c-3.310 0-6-2.690-6-6s2.690-6 6-6c1.660 0 3.140.69 4.220 1.780L13 11h7V4l-2.350 2.350z"/></svg>
<svg class="i" style="left:423.2px;top:180.5px;width:3.6px;height:12px;fill:#444746;" viewBox="10 4 4 16" preserveAspectRatio="none"><path d="M12 8c1.1 0 2-.9 2-2s-.9-2-2-2-2 .9-2 2 .9 2 2 2zm0 2c-1.1 0-2 .9-2 2s.9 2 2 2 2-.9 2-2-.9-2-2-2zm0 6c-1.1 0-2 .9-2 2s.9 2 2 2 2-.9 2-2-.9-2-2-2z"/></svg>
<svg class="i" style="left:1148px;top:181.5px;width:5.5px;height:10px;fill:#b4b7bb;" viewBox="8 6 7.41 12" preserveAspectRatio="none"><path d="M15.41 7.41L14 6l-6 6 6 6 1.410-1.410L10.83 12z"/></svg>
<svg class="i" style="left:1185.5px;top:181.5px;width:6px;height:10px;fill:#b4b7bb;" viewBox="8.59 6 7.41 12" preserveAspectRatio="none"><path d="M10 6L8.59 7.41 13.17 12l-4.58 4.59L10 18l6-6z"/></svg>
<svg class="i" style="left:323px;top:222px;width:13px;height:13px;fill:#b2b6bc;" viewBox="3 3 18 18" preserveAspectRatio="none"><path d="M19 5v14H5V5h14m0-2H5c-1.1 0-2 .9-2 2v14c0 1.1.9 2 2 2h14c1.1 0 2-.9 2-2V5c0-1.1-.9-2-2-2z"/></svg>
<svg class="i" style="left:350.5px;top:221.8px;width:15.5px;height:14.2px;fill:#b2b6bc;" viewBox="2 2 20 19" preserveAspectRatio="none"><path d="M22 9.24l-7.19-.62L12 2 9.19 8.63 2 9.24l5.46 4.73L5.82 21 12 17.27 18.18 21l-1.63-7.03L22 9.24zM12 15.4l-3.76 2.27 1-4.28-3.32-2.88 4.38-.38L12 6.1l1.71 4.04 4.38.38-3.32 2.88 1 4.28L12 15.4z"/></svg>
<svg class="i" style="left:380.5px;top:223.5px;width:14px;height:10.5px;fill:#b2b6bc;" viewBox="3 5 18 14" preserveAspectRatio="none"><path d="M15 19H3l4.5-7L3 5h12c.65 0 1.26.31 1.63.84L21 12l-4.37 6.16c-.37.52-.98.84-1.63.84zm-8.5-2H15l3.5-5L15 7H6.5l3.5 5-3.500 5z"/></svg>
<svg class="i" style="left:323px;top:260px;width:13px;height:13px;fill:#b2b6bc;" viewBox="3 3 18 18" preserveAspectRatio="none"><path d="M19 5v14H5V5h14m0-2H5c-1.1 0-2 .9-2 2v14c0 1.1.9 2 2 2h14c1.1 0 2-.9 2-2V5c0-1.1-.9-2-2-2z"/></svg>
<svg class="i" style="left:350.5px;top:259.8px;width:15.5px;height:14.2px;fill:#b2b6bc;" viewBox="2 2 20 19" preserveAspectRatio="none"><path d="M22 9.24l-7.19-.62L12 2 9.19 8.63 2 9.24l5.46 4.73L5.82 21 12 17.27 18.18 21l-1.63-7.03L22 9.24zM12 15.4l-3.76 2.27 1-4.28-3.32-2.88 4.38-.38L12 6.1l1.71 4.04 4.38.38-3.32 2.88 1 4.28L12 15.4z"/></svg>
<svg class="i" style="left:380.5px;top:261.5px;width:14px;height:10.5px;fill:#b2b6bc;" viewBox="3 5 18 14" preserveAspectRatio="none"><path d="M15 19H3l4.5-7L3 5h12c.65 0 1.26.31 1.63.84L21 12l-4.37 6.16c-.37.52-.98.84-1.63.84zm-8.5-2H15l3.5-5L15 7H6.5l3.5 5-3.500 5z"/></svg>
<svg class="i" style="left:323px;top:298px;width:13px;height:13px;fill:#b2b6bc;" viewBox="3 3 18 18" preserveAspectRatio="none"><path d="M19 5v14H5V5h14m0-2H5c-1.1 0-2 .9-2 2v14c0 1.1.9 2 2 2h14c1.1 0 2-.9 2-2V5c0-1.1-.9-2-2-2z"/></svg>
<svg class="i" style="left:350.5px;top:297.8px;width:15.5px;height:14.2px;fill:#b2b6bc;" viewBox="2 2 20 19" preserveAspectRatio="none"><path d="M22 9.24l-7.19-.62L12 2 9.19 8.63 2 9.24l5.46 4.73L5.82 21 12 17.27 18.18 21l-1.63-7.03L22 9.24zM12 15.4l-3.76 2.27 1-4.28-3.32-2.88 4.38-.38L12 6.1l1.71 4.04 4.38.38-3.32 2.88 1 4.28L12 15.4z"/></svg>
<svg class="i" style="left:380.5px;top:299.5px;width:14px;height:10.5px;fill:#b2b6bc;" viewBox="3 5 18 14" preserveAspectRatio="none"><path d="M15 19H3l4.5-7L3 5h12c.65 0 1.26.31 1.63.84L21 12l-4.37 6.16c-.37.52-.98.84-1.63.84zm-8.5-2H15l3.5-5L15 7H6.5l3.5 5-3.500 5z"/></svg>
<svg class="i" style="left:323px;top:336px;width:13px;height:13px;fill:#b2b6bc;" viewBox="3 3 18 18" preserveAspectRatio="none"><path d="M19 5v14H5V5h14m0-2H5c-1.1 0-2 .9-2 2v14c0 1.1.9 2 2 2h14c1.1 0 2-.9 2-2V5c0-1.1-.9-2-2-2z"/></svg>
<svg class="i" style="left:350.5px;top:335.8px;width:15.5px;height:14.2px;fill:#b2b6bc;" viewBox="2 2 20 19" preserveAspectRatio="none"><path d="M22 9.24l-7.19-.62L12 2 9.19 8.63 2 9.24l5.46 4.73L5.82 21 12 17.27 18.18 21l-1.63-7.03L22 9.24zM12 15.4l-3.76 2.27 1-4.28-3.32-2.88 4.38-.38L12 6.1l1.71 4.04 4.38.38-3.32 2.88 1 4.28L12 15.4z"/></svg>
<svg class="i" style="left:380.5px;top:337.5px;width:14px;height:10.5px;fill:#b2b6bc;" viewBox="3 5 18 14" preserveAspectRatio="none"><path d="M15 19H3l4.5-7L3 5h12c.65 0 1.26.31 1.63.84L21 12l-4.37 6.16c-.37.52-.98.84-1.63.84zm-8.5-2H15l3.5-5L15 7H6.5l3.5 5-3.500 5z"/></svg>
<svg class="i" style="left:323px;top:374px;width:13px;height:13px;fill:#b2b6bc;" viewBox="3 3 18 18" preserveAspectRatio="none"><path d="M19 5v14H5V5h14m0-2H5c-1.1 0-2 .9-2 2v14c0 1.1.9 2 2 2h14c1.1 0 2-.9 2-2V5c0-1.1-.9-2-2-2z"/></svg>
<svg class="i" style="left:350.5px;top:373.8px;width:15.5px;height:14.2px;fill:#b2b6bc;" viewBox="2 2 20 19" preserveAspectRatio="none"><path d="M22 9.24l-7.19-.62L12 2 9.19 8.63 2 9.24l5.46 4.73L5.82 21 12 17.27 18.18 21l-1.63-7.03L22 9.24zM12 15.4l-3.76 2.27 1-4.28-3.32-2.88 4.38-.38L12 6.1l1.71 4.04 4.38.38-3.32 2.88 1 4.28L12 15.4z"/></svg>
<svg class="i" style="left:380.5px;top:375.5px;width:14px;height:10.5px;fill:#b2b6bc;" viewBox="3 5 18 14" preserveAspectRatio="none"><path d="M15 19H3l4.5-7L3 5h12c.65 0 1.26.31 1.63.84L21 12l-4.37 6.16c-.37.52-.98.84-1.63.84zm-8.5-2H15l3.5-5L15 7H6.5l3.5 5-3.500 5z"/></svg>
</main>
<footer class="g">
<span class="t" style="left:320.32px;top:552px;font-size:11.9px;color:#5f6368;transform:scaleX(0.9489);">49.56 GB of 130 GB used</span>
<span class="t" style="left:714.59px;top:533px;font-size:11.9px;color:#5f6368;transform:scaleX(0.9759);">Program Policies</span>
<span class="t" style="left:707.59px;top:552px;font-size:11.9px;color:#5f6368;transform:scaleX(0.9747);">Powered by Google</span>
<span class="t" style="left:1017.58px;top:533px;font-size:11.9px;color:#5f6368;transform:scaleX(0.9853);">Last account activity: 1 minute ago</span>
<span class="t" style="left:1161.07px;top:552px;font-size:11.9px;color:#5f6368;transform:scaleX(0.9979);">Details</span>
<svg class="i" style="left:458.5px;top:549.5px;width:13.5px;height:13px;fill:#444746;" viewBox="3 3 18 18" preserveAspectRatio="none"><path d="M19 19H5V5h7V3H5a2 2 0 0 0-2 2v14a2 2 0 0 0 2 2h14c1.1 0 2-.9 2-2v-7h-2v7zM14 3v2h3.59l-9.830 9.830 1.410 1.410L19 6.410V10h2V3h-7z"/></svg>
</footer>
</div>
<div class="layer" id="scrim" style="background:rgba(32,33,36,0.445)"></div>
<div class="layer" id="modal">
<div class="g" role="dialog" aria-label="New label">
<div class="b" style="left:399px;top:256px;width:480px;height:235px;background:#ffffff;border-radius:3px;box-shadow:0 1px 1.500px 0 rgba(40,43,46,.55),0 2px 4px 1px rgba(60,64,67,.16);"></div>
<div class="b" style="left:422px;top:340px;width:403px;height:22px;background:#fff;border-radius:2.5px;border:1px solid #868686;box-sizing:border-box;"></div>
<div class="b" style="left:422px;top:371px;width:12.5px;height:13px;background:#fff;border-radius:2.5px;border:1px solid #767676;box-sizing:border-box;"></div>
<div class="b" style="left:422px;top:391px;width:395px;height:20.5px;background:#fff;border-radius:2.5px;border:1px solid #868686;box-sizing:border-box;"></div>
<svg class="i" style="left:805px;top:398.500px;width:8px;height:5px;fill:none;stroke:#222;stroke-width:1.400" viewBox="0 0 8 5"><path d="M.5 .5 L4 4 L7.500 .5"/></svg>
<div class="b" style="left:780px;top:434px;width:76px;height:34px;background:#1a73e8;border-radius:17px;"></div>
<span class="t" style="left:421.14px;top:280px;font-size:22.2px;color:#202124;transform:scaleX(0.9567);">New label</span>
<span class="t" style="left:421.73px;top:320px;font-size:13.7px;color:#5f6368;transform:scaleX(0.9958);">No name specified. Please try another name:</span>
<span class="t" style="left:424.99px;top:345px;font-size:13px;color:#000;transform:scaleX(0.9981);">FYI</span>
<span class="t" style="left:438.23px;top:371px;font-size:13.7px;color:#5f6368;transform:scaleX(0.9994);">Nest label under:</span>
<span class="t" style="left:712.33px;top:445px;font-size:13.7px;color:#3c4043;transform:scaleX(1.0365);-webkit-text-stroke:0.25px #3c4043;">Cancel</span>
<span class="t" style="left:796.83px;top:445px;font-size:13.7px;color:#ffffff;transform:scaleX(1.0395);-webkit-text-stroke:0.25px #ffffff;">Create</span>
<svg class="i" style="left:840.5px;top:282px;width:13px;height:13px;fill:#444746;" viewBox="5 5 14 14" preserveAspectRatio="none"><path d="M19 6.41L17.59 5 12 10.59 6.41 5 5 6.41 10.59 12 5 17.59 6.41 19 12 13.41 17.59 19 19 17.59 13.41 12z"/></svg>
</div>
<div class="g" id="annotation">
<svg class="i" style="left:850px;top:410px;width:180px;height:95px" viewBox="0 0 1280 676">
<g fill="#29abe2" stroke="#29abe2" stroke-linejoin="round" stroke-linecap="round">
<path d="M78 292 L200 281 Q330 292 500 291 Q660 290 800 274 Q1000 242 1185 196 Q1205 200 1200 216 Q1100 256 900 316 Q720 352 600 352 Q450 352 230 326 Z" stroke-width="6"/>
<path d="M80 291 L205 212 L222 268 L236 328 L205 368 Z" stroke-width="4"/>
<path d="M88 290 Q260 190 392 110" fill="none" stroke-width="40"/>
<path d="M90 300 Q270 385 350 470 Q400 520 438 582" fill="none" stroke-width="38"/>
</g></svg>
</div>
</div>
</body></html>
